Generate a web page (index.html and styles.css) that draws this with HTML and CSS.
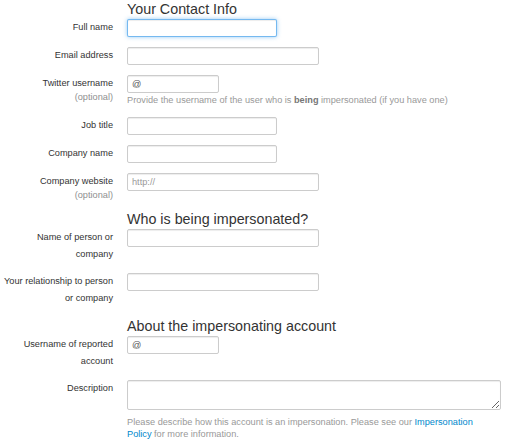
FILE: index.html
```html
<!DOCTYPE html>
<html lang="en">
<head>
<meta charset="utf-8">
<title>Report impersonation</title>
<link rel="stylesheet" href="styles.css">
</head>
<body>
<form class="form">
  <h3 class="section-title">Your Contact Info</h3>
  <div class="field">
    <label class="field-label">Full name</label>
    <div class="field-control"><input class="input input-md is-focused" type="text"></div>
  </div>
  <div class="field">
    <label class="field-label">Email address</label>
    <div class="field-control"><input class="input input-lg" type="text"></div>
  </div>
  <div class="field">
    <label class="field-label">Twitter username<span class="optional">(optional)</span></label>
    <div class="field-control">
      <input class="input input-sm" type="text" value="@">
      <p class="help">Provide the username of the user who is <b>being</b> impersonated (if you have one)</p>
    </div>
  </div>
  <div class="field">
    <label class="field-label">Job title</label>
    <div class="field-control"><input class="input input-md" type="text"></div>
  </div>
  <div class="field">
    <label class="field-label">Company name</label>
    <div class="field-control"><input class="input input-md" type="text"></div>
  </div>
  <div class="field">
    <label class="field-label">Company website<span class="optional">(optional)</span></label>
    <div class="field-control"><input class="input input-lg" type="text" placeholder="http://"></div>
  </div>

  <h3 class="section-title">Who is being impersonated?</h3>
  <div class="field">
    <label class="field-label">Name of person or company</label>
    <div class="field-control"><input class="input input-lg" type="text"></div>
  </div>
  <div class="field">
    <label class="field-label">Your relationship to person or company</label>
    <div class="field-control"><input class="input input-lg" type="text"></div>
  </div>

  <h3 class="section-title">About the impersonating account</h3>
  <div class="field">
    <label class="field-label">Username of reported account</label>
    <div class="field-control"><input class="input input-sm" type="text" value="@"></div>
  </div>
  <div class="field">
    <label class="field-label">Description</label>
    <div class="field-control">
      <textarea class="input textarea"></textarea>
      <p class="help help-after-area">Please describe how this account is an impersonation. Please see our <a class="link" href="#">Impersonation Policy</a> for more information.</p>
    </div>
  </div>
</form>
</body>
</html>
```

FILE: styles.css
```css
html, body {
  margin: 0;
  padding: 0;
  background: #ffffff;
}

body {
  font-family: "Liberation Sans", Arial, Helvetica, sans-serif;
  font-size: 9.2px;
  color: #333333;
}

.form {
  margin: 0;
  width: 511px;
}

.section-title {
  margin: 0 0 1px 127px;
  font-size: 14.3px;
  font-weight: normal;
  line-height: 18px;
  color: #333333;
}

.field {
  display: grid;
  grid-template-columns: 113px 374px;
  column-gap: 14px;
  margin-bottom: 10px;
}

.field-label {
  text-align: right;
  line-height: 17px;
  color: #333333;
}

.optional {
  display: block;
  line-height: 10px;
  color: #8f8f8f;
}

.field-control {
  display: flex;
  flex-direction: column;
  align-items: flex-start;
}

.input {
  box-sizing: border-box;
  height: 18px;
  margin: 0;
  padding: 0 4px;
  font-family: inherit;
  font-size: 9.2px;
  color: #555555;
  background: #ffffff;
  border: 1px solid #cccccc;
  border-radius: 2px;
  box-shadow: inset 0 1px 1px rgba(0, 0, 0, 0.075);
  outline: none;
}

.input::placeholder {
  color: #999999;
}

.input-sm { width: 92px; }
.input-md { width: 150px; }
.input-lg { width: 192px; }

.is-focused {
  border-color: rgba(82, 168, 236, 0.8);
  box-shadow: inset 0 1px 1px rgba(0, 0, 0, 0.075), 0 0 4px rgba(82, 168, 236, 0.6);
}

.textarea {
  display: block;
  width: 374px;
  height: 30px;
  padding: 2px 4px;
  margin-bottom: 5px;
  resize: both;
}

.help {
  margin: 1px 0 1px;
  line-height: 12px;
  color: #999999;
}

.help-after-area {
  max-width: 360px;
}

.help b {
  color: #777777;
}

.link {
  color: #0088cc;
  text-decoration: none;
}
```
